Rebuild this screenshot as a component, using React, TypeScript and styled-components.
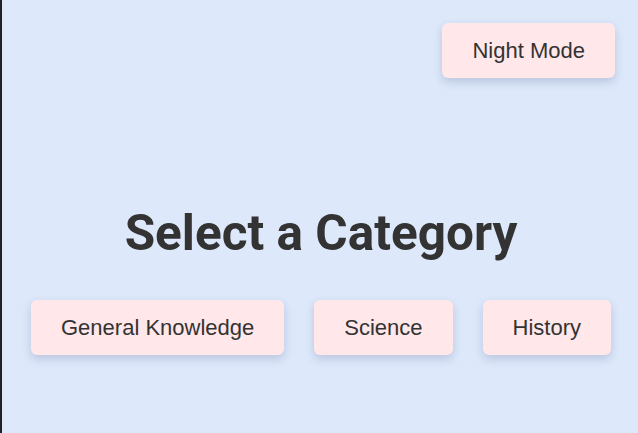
import React from 'react';
import styled, { createGlobalStyle } from 'styled-components';

const GlobalStyle = createGlobalStyle`
  html, body {
    margin: 0;
    padding: 0;
    height: 100%;
  }
  body {
    background: #dde8fa;
    border-left: 2px solid #202124;
    box-sizing: border-box;
    font-family: 'Liberation Sans', Arial, sans-serif;
    color: #333333;
  }
`;

const Page = styled.div`
  min-height: 433px;
  display: flex;
  flex-direction: column;
`;

const TopBar = styled.header`
  display: flex;
  justify-content: flex-end;
  padding: 23px 23px 0 0;
`;

const Button = styled.button`
  background: #ffe7ea;
  color: #333333;
  border: none;
  border-radius: 6px;
  padding: 15px 30px;
  font-family: 'Liberation Sans', Arial, sans-serif;
  font-size: 22px;
  line-height: 25px;
  box-shadow: 0 4px 10px rgba(40, 60, 110, 0.2);
  cursor: pointer;
`;

const Main = styled.main`
  display: flex;
  flex-direction: column;
  align-items: center;
  padding: 126px 0 0 2px;
`;

const Title = styled.h1`
  margin: 0;
  font-family: Roboto, 'Liberation Sans', sans-serif;
  font-weight: 700;
  font-size: 49.5px;
  line-height: 58px;
  color: #333333;
`;

const CategoryRow = styled.div`
  display: flex;
  gap: 30px;
  margin-top: 38px;
`;

const categories = ['General Knowledge', 'Science', 'History'];

export default function App() {
  return (
    <>
      <GlobalStyle />
      <Page>
        <TopBar>
          <Button>Night Mode</Button>
        </TopBar>
        <Main>
          <Title>Select a Category</Title>
          <CategoryRow>
            {categories.map((c) => (
              <Button key={c}>{c}</Button>
            ))}
          </CategoryRow>
        </Main>
      </Page>
    </>
  );
}
